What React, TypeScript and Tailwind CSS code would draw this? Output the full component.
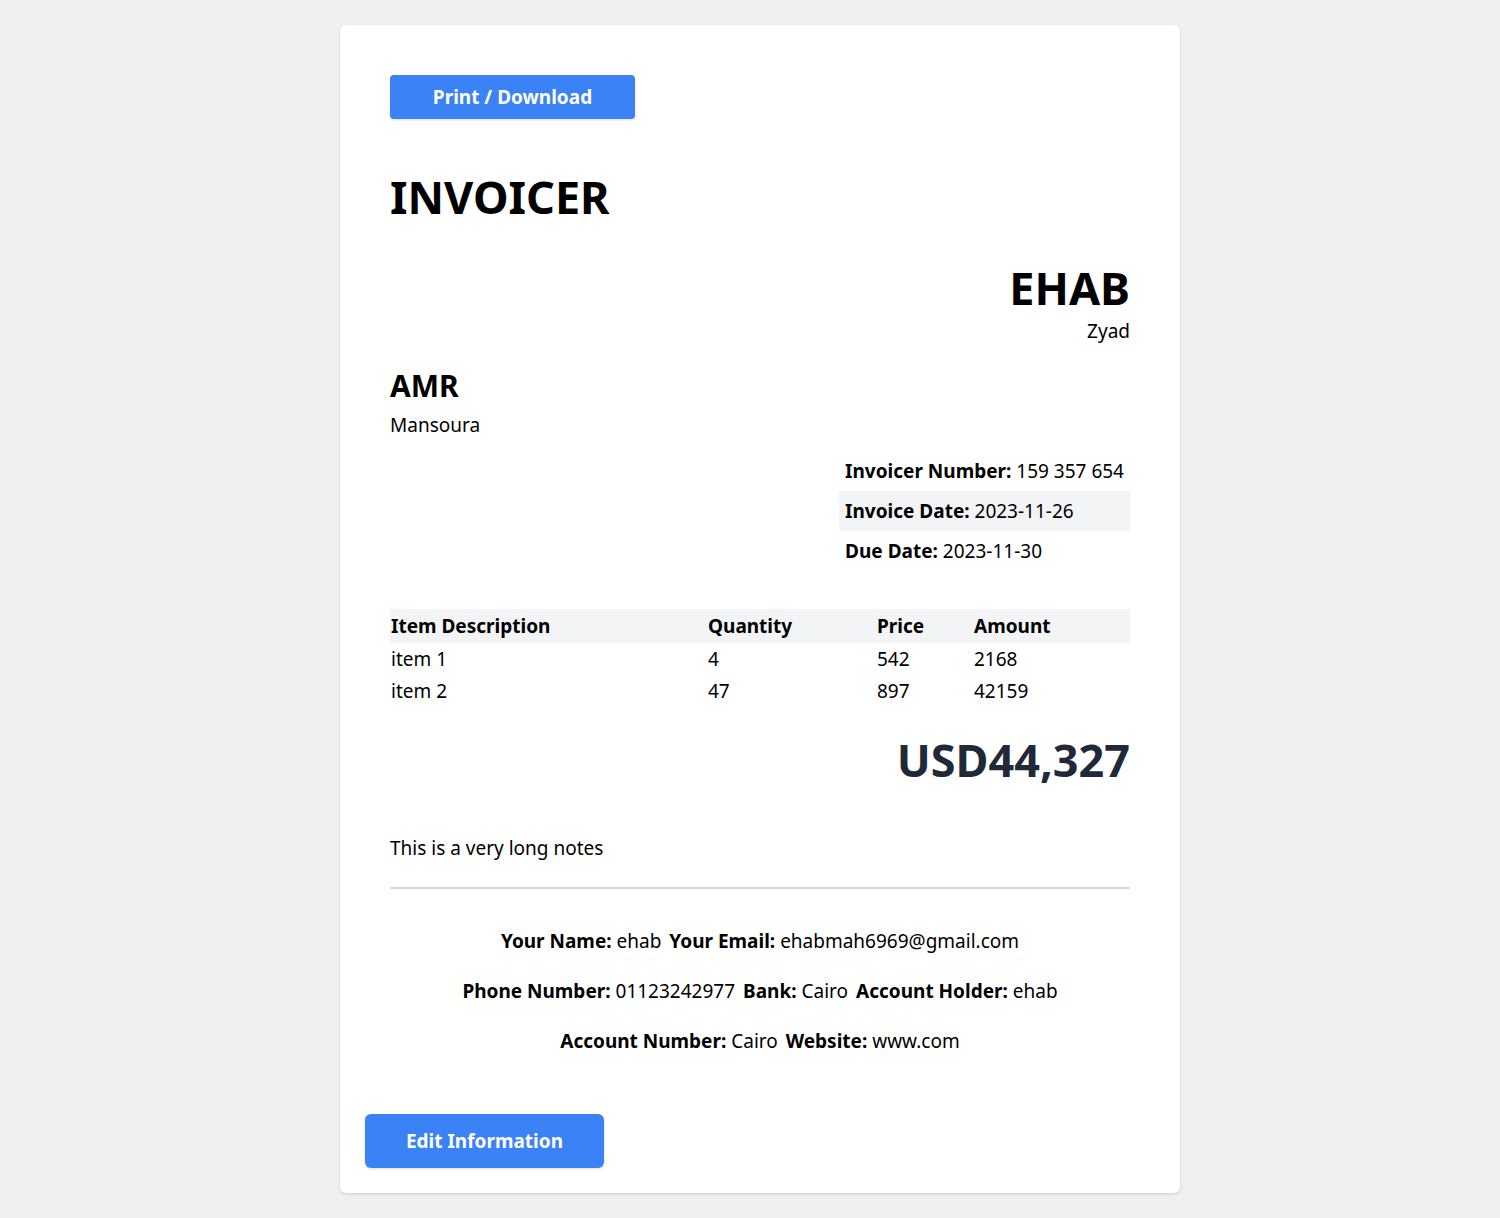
import React from 'react';

const items = [
  { description: 'item 1', quantity: 4, price: 542, amount: 2168 },
  { description: 'item 2', quantity: 47, price: 897, amount: 42159 },
];

const details = [
  { label: 'Invoicer Number:', value: '159 357 654' },
  { label: 'Invoice Date:', value: '2023-11-26' },
  { label: 'Due Date:', value: '2023-11-30' },
];

const Field = ({ label, value }: { label: string; value: string }) => (
  <span>
    <span className="font-bold">{label}</span> {value}
  </span>
);

export default function App() {
  const total = items.reduce((sum, i) => sum + i.amount, 0);

  return (
    <div className="flex min-h-screen justify-center bg-[#f0f0f0] py-[25px] pl-5 font-['Noto_Sans',sans-serif] text-black">
      <main className="w-[840px] rounded-md bg-white p-[25px] shadow-[0_1px_3px_rgba(0,0,0,0.15)]">
        <div className="p-[25px]">
          <button className="h-[44px] w-[245px] rounded bg-[#3b82f6] text-[19px] font-bold leading-7 text-white shadow-sm">
            Print / Download
          </button>

          <header className="mt-[55px]">
            <h1 className="text-[45px] font-bold leading-none">INVOICER</h1>
          </header>

          <section className="mt-[46px] flex flex-col items-end">
            <h2 className="text-[45px] font-bold leading-none">EHAB</h2>
            <p className="mt-[7px] text-[19px] leading-7">Zyad</p>
          </section>

          <section className="mt-[23px]">
            <h2 className="text-3xl font-bold">AMR</h2>
            <p className="mt-[7px] text-[19px] leading-7">Mansoura</p>
          </section>

          <section className="mt-3 flex justify-end">
            <table className="text-[19px] leading-7">
              <tbody>
                {details.map((d, idx) => (
                  <tr key={d.label} className={idx === 1 ? 'bg-[#f3f4f6]' : ''}>
                    <td className="px-1.5 py-1.5">
                      <span className="font-bold">{d.label}</span> {d.value}
                    </td>
                  </tr>
                ))}
              </tbody>
            </table>
          </section>

          <table className="mt-[38px] w-full table-fixed text-left text-[19px] leading-7">
            <thead>
              <tr className="bg-[#f3f4f6]">
                <th className="w-[317px] px-px py-[3px] font-bold">Item Description</th>
                <th className="w-[169px] px-px py-[3px] font-bold">Quantity</th>
                <th className="w-[97px] px-px py-[3px] font-bold">Price</th>
                <th className="px-px py-[3px] font-bold">Amount</th>
              </tr>
            </thead>
            <tbody>
              {items.map((item) => (
                <tr key={item.description}>
                  <td className="px-px py-0.5">{item.description}</td>
                  <td className="px-px py-0.5">{item.quantity}</td>
                  <td className="px-px py-0.5">{item.price}</td>
                  <td className="px-px py-0.5">{item.amount}</td>
                </tr>
              ))}
            </tbody>
          </table>

          <div className="mt-[30px] flex justify-end">
            <h2 className="text-[45px] font-bold leading-none text-[#1f2937]">
              USD{total.toLocaleString('en-US')}
            </h2>
          </div>

          <p className="mt-[52px] text-[19px] leading-7">This is a very long notes</p>

          <footer className="mt-[25px] border-t-2 border-[#d1d5db] pt-[38px]">
            <ul className="flex flex-col items-center gap-[22px] text-[19px] leading-7">
              <li className="flex gap-2">
                <Field label="Your Name:" value="ehab" />
                <Field label="Your Email:" value="ehabmah6969@gmail.com" />
              </li>
              <li className="flex gap-2">
                <Field label="Phone Number:" value="01123242977" />
                <Field label="Bank:" value="Cairo" />
                <Field label="Account Holder:" value="ehab" />
              </li>
              <li className="flex gap-2">
                <Field label="Account Number:" value="Cairo" />
                <Field label="Website:" value="www.com" />
              </li>
            </ul>
          </footer>
        </div>

        <button className="mt-[34px] h-[54px] w-[239px] rounded-md bg-[#3b82f6] text-[19px] font-bold leading-7 text-white shadow-sm">
          Edit Information
        </button>
      </main>
    </div>
  );
}
